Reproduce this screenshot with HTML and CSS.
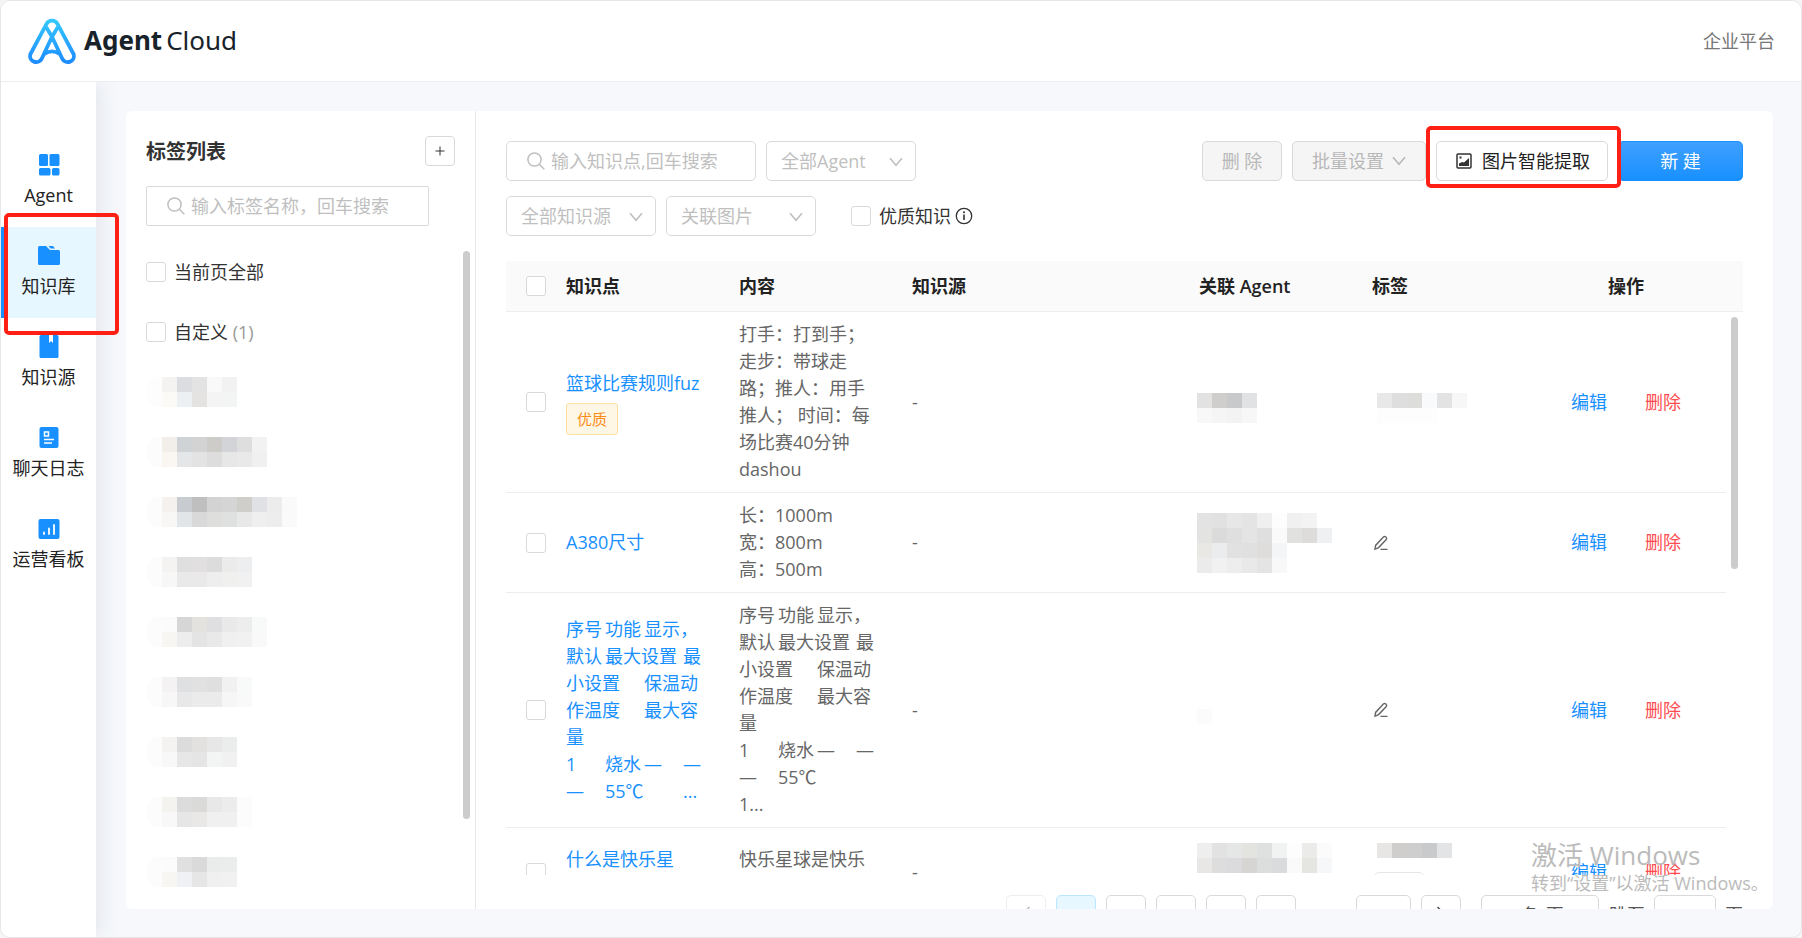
FILE: index.html
```html
<!DOCTYPE html>
<html lang="zh-CN">
<head>
<meta charset="utf-8">
<title>Agent Cloud</title>
<link rel="stylesheet" href="styles.css">
</head>
<body>
<svg class="sprite" aria-hidden="true">
  <symbol id="i-search" viewBox="0 0 18 18"><circle cx="7.5" cy="7.5" r="6.6"/><path d="M12.3 12.3 17.3 17.3"/></symbol>
  <symbol id="i-down" viewBox="0 0 14 10"><path d="M1 1.2 7 8.2 13 1.2"/></symbol>
  <symbol id="i-pencil" viewBox="0 0 16 16"><path d="M2 14.2 2.6 10.4 10.6 1.8Q11.7 1 12.9 2 14.3 3.2 13.3 4.5L5.6 12.6 2 14.2ZM7.5 14.4H14.5"/></symbol>
</svg>
<div class="window">
  <header class="topbar">
    <div class="brand">
      <svg class="brand-mark" viewBox="0 0 50 47" aria-hidden="true">
        <defs><linearGradient id="g" x1="0" y1="0" x2="0" y2="1"><stop offset="0" stop-color="#36c6ff"/><stop offset="1" stop-color="#1c8cff"/></linearGradient></defs>
        <path d="M30.6 9.500 25 18.800 14.600 41A6.200 6.200 0 0 1 3.200 36.500L19.400 6.200A6.200 6.200 0 0 1 30.600 6.200L46.800 36.500A6.200 6.200 0 0 1 35.400 41L25 18.800 19.400 9.500M17.500 35.800Q25 31 32.500 35.800" fill="none" stroke="url(#g)" stroke-width="3.800" stroke-linecap="round" stroke-linejoin="round"/>
      </svg>
      <span class="brand-text"><b>Agent</b><span>Cloud</span></span>
    </div>
    <a class="platform" href="#">企业平台</a>
  </header>
  <div class="body">
    <nav class="side">
      <a class="nav-item" href="#">
        <svg viewBox="0 0 24 24"><g fill="#1890ff"><rect x="2" y="1" width="9" height="12" rx="1.5"/><rect x="12.500" y="1" width="10" height="12" rx="1.500"/><rect x="2" y="15" width="11.500" height="7.500" rx="1.500"/><rect x="15" y="15" width="7.500" height="7.500" rx="1.500"/></g></svg>
        <span>Agent</span></a>
      <a class="nav-item active" href="#">
        <svg viewBox="0 0 24 24"><path fill="#1890ff" d="M2.500 2H9l4 4h8.500A1.500 1.500 0 0 1 23 7.500v12a1.500 1.500 0 0 1-1.500 1.500h-19A1.500 1.500 0 0 1 1 19.500v-16A1.500 1.500 0 0 1 2.500 2ZM11.500 2H16l2 2.500h-4.500Z"/></svg>
        <span>知识库</span></a>
      <a class="nav-item" href="#">
        <svg viewBox="0 0 24 24"><path fill="#1890ff" d="M4 0h8v8l2-2 2 2V0h4a1.500 1.500 0 0 1 1.500 1.500v20A1.500 1.500 0 0 1 20 23H4a1.500 1.500 0 0 1-1.500-1.500v-20A1.500 1.500 0 0 1 4 0Z"/></svg>
        <span>知识源</span></a>
      <a class="nav-item" href="#">
        <svg viewBox="0 0 24 24"><rect x="2.500" y="1" width="19" height="21" rx="2" fill="#1890ff"/><path d="M7.500 6h4v4h-4zM7 13.500h10M7 17h8" fill="none" stroke="#fff" stroke-width="1.500"/></svg>
        <span>聊天日志</span></a>
      <a class="nav-item" href="#">
        <svg viewBox="0 0 24 24"><rect x="1.500" y="2" width="21" height="20" rx="2" fill="#1890ff"/><path d="M7 15.500v1.500M12 11.500v5.500M17 8v9" fill="none" stroke="#fff" stroke-width="1.800" stroke-linecap="round"/></svg>
        <span>运营看板</span></a>
    </nav>
    <main class="card">
      <aside class="tags">
        <div class="tags-head"><h2>标签列表</h2><button class="add" type="button" aria-label="添加标签"><svg viewBox="0 0 10 10"><path d="M5 .5v9M.5 5h9"/></svg></button></div>
        <label class="search square"><svg><use href="#i-search"/></svg><input type="text" placeholder="输入标签名称，回车搜索" aria-label="搜索标签"></label>
        <div class="tag-list">
          <label class="check"><input type="checkbox"><span>当前页全部</span></label>
          <label class="check"><input type="checkbox"><span>自定义 <em>(1)</em></span></label>
          <div class="mosaic" data-tiles="fdfdfd f4f3f1 dcdde1 e3e3e3 f9f9f9 f2f2f2|fdfdfd fbfaf6 edf0f3 e4e3e1 f4f4f4 f3f5f5"></div>
          <div class="mosaic" data-tiles="fcfcfc f2eeea cfd3d6 d3d3d3 cdccc9 d3d4d8 dedede f2f2f2|fcfcfc faf6f2 e4e6e8 e3e3e3 dddddd e7e7e7 e9e9e9 f0f0f0"></div>
          <div class="mosaic" data-tiles="fcfcfc f5f1ee c8ccd0 bfbfbf d3d3d3 d5d5d5 d0cecb dfe1e4 ececec fafafa|fcfcfc f8f7f5 e2e5e8 d9d9d9 dededd dfe1e0 e8e8e8 efefef ededed fafafa"></div>
          <div class="mosaic" data-tiles="fcfcfc f4f3f2 dfdfdf e1dfe0 dcdcdc ebebeb eceef0|fcfcfc f7f7f7 e9e9e9 e9e9e9 eeeeee f0f0ee f1f1f1"></div>
          <div class="mosaic" data-tiles="fcfcfc fbfbfb d6d6d6 e4e2df dfdfe2 e9e9e9 ededed f7faf8|fcfcfc f7f6f3 ededed e4e4e4 e9e9e9 f0f0f0 f1f1f1 f9f9f9"></div>
          <div class="mosaic" data-tiles="fcfcfc f5f2f3 dee0e2 e1e1e1 dfdfdf f1f1f1 f8faf9|fcfcfc f7f7f7 e8e8e8 ebebeb ebebeb f6f6f6 f9f9f9"></div>
          <div class="mosaic" data-tiles="fcfcfc f4f3f1 dcdcdc e2e1df e7e7e7 ebedec|fcfcfc f8f8f8 e7e7e7 e5e5e5 f2f5f4 f1f1f1"></div>
          <div class="mosaic" data-tiles="fcfcfc f4f3f0 dcdcdc dadad8 e8e8e8 ececec fcfcfc|fcfcfc f8f8f8 e6e6e6 eae8e6 f0f0f0 f0f0f0 fcfcfc"></div>
          <div class="mosaic" data-tiles="fcfcfc fbfbfb e0e0e0 dadada eaecec ebedec|fcfcfc f7f6f3 eff1f4 e6e6e6 f0f0f0 f1f1f1"></div>
        </div>
        <div class="thumb"></div>
      </aside>
      <section class="content">
        <div class="toolbar">
          <div class="filters">
            <label class="search wide"><svg><use href="#i-search"/></svg><input type="text" placeholder="输入知识点,回车搜索" aria-label="搜索知识点"></label>
            <div class="pick"><select aria-label="Agent"><option>全部Agent</option></select><svg><use href="#i-down"/></svg></div>
          </div>
          <div class="actions">
            <button class="btn" type="button" disabled>删 除</button>
            <button class="btn batch" type="button" disabled>批量设置<svg><use href="#i-down"/></svg></button>
            <div class="marked"><button class="btn plain" type="button"><svg viewBox="0 0 16 16"><rect x="1" y="1" width="14" height="14" rx="1" fill="none" stroke="#333" stroke-width="1.500"/><path fill="#333" d="M3 13v-2.500l3-1.500 2 .5L13 5v8ZM3.500 3.500h2v2h-2z"/></svg>图片智能提取</button></div>
            <button class="btn primary" type="button">新 建</button>
          </div>
        </div>
        <div class="filters second">
          <div class="pick"><select aria-label="知识源"><option>全部知识源</option></select><svg><use href="#i-down"/></svg></div>
          <div class="pick"><select aria-label="图片"><option>关联图片</option></select><svg><use href="#i-down"/></svg></div>
          <label class="check quality"><input type="checkbox"><span>优质知识</span><svg viewBox="0 0 18 18"><circle cx="9" cy="9" r="7.700" fill="none" stroke="#333" stroke-width="1.300"/><path d="M9 7.500V13" stroke="#333" stroke-width="1.600"/><circle cx="9" cy="5.200" r="1" fill="#333"/></svg></label>
        </div>
        <div class="table-wrap">
          <table>
            <colgroup><col class="c-check"><col class="c-std"><col class="c-std"><col><col class="c-std"><col class="c-tag"><col class="c-ops"><col class="c-gutter"></colgroup>
            <thead><tr><th><input type="checkbox" aria-label="全选"></th><th>知识点</th><th>内容</th><th>知识源</th><th>关联 Agent</th><th>标签</th><th class="ops">操作</th><th></th></tr></thead>
            <tbody>
              <tr><td><input type="checkbox" aria-label="选择"></td>
                <td><a href="#">篮球比赛规则fuz</a><span class="badge">优质</span></td>
                <td class="pre">打手：打到手；
走步：带球走
路；推人：用手
推人； 时间：每
场比赛40分钟
dashou</td>
                <td>-</td>
                <td class="low"><div class="mosaic" data-tiles="e2e2e2 d0cecc c8c9cb e1e2e4|f8f8f8 f5f5f5 f3f3f3 f7f7f7"></div></td>
                <td class="low"><div class="mosaic tag-tiles" data-tiles="e8e8e8 dedede dddddb f8fafc e3e3e3 f7f7f7|fdfdfd fdfdfd fdfdfd fdfdfd ffffff ffffff"></div></td>
                <td class="ops"><a href="#">编辑</a><a class="del" href="#">删除</a></td><td></td></tr>
              <tr><td><input type="checkbox" aria-label="选择"></td>
                <td><a href="#">A380尺寸</a></td>
                <td class="pre">长：1000m
宽：800m
高：500m</td>
                <td>-</td>
                <td><div class="mosaic" data-tiles="e3e3e3 e1e1e1 e7e7e7 e4e4e4 efefef fdfdfd f0f0f0 f3f3f3 ffffff|e3e3e1 dbdbdb dfdfdf e4e4e4 dfdfdf fafafa e1e1e0 dddcda eff0f2|e9e8e4 eaecee e1e1e1 e0e0e0 dedddc f4f5f7|ebebec f1f1f1 ededed e9e9e9 e4e4e4 f8f8f8"></div></td>
                <td><svg class="pencil"><use href="#i-pencil"/></svg></td>
                <td class="ops"><a href="#">编辑</a><a class="del" href="#">删除</a></td><td></td></tr>
              <tr><td><input type="checkbox" aria-label="选择"></td>
                <td class="pre"><a href="#">序号&#9;功能&#9;显示，
默认&#9;最大设置&#9;最
小设置&#9;保温动
作温度&#9;最大容
量
1&#9;烧水&#9;—&#9;—
—&#9;55℃&#9;...</a></td>
                <td class="pre">序号&#9;功能&#9;显示，
默认&#9;最大设置&#9;最
小设置&#9;保温动
作温度&#9;最大容
量
1&#9;烧水&#9;—&#9;—
—&#9;55℃
1...</td>
                <td>-</td>
                <td class="low"><div class="mosaic" data-tiles="fbfbfb"></div></td>
                <td><svg class="pencil"><use href="#i-pencil"/></svg></td>
                <td class="ops"><a href="#">编辑</a><a class="del" href="#">删除</a></td><td></td></tr>
              <tr><td><input type="checkbox" aria-label="选择"></td>
                <td><a class="two-line" href="#">什么是快乐星</a></td>
                <td><div class="two-line">快乐星球是快乐</div></td>
                <td>-</td>
                <td class="top"><div class="mosaic" data-tiles="eeeeee e2e2e2 e5e6e6 e3e3e0 dfe1e0 f1f3f2 fdfdfd ebebea fafbfa|e8e7e6 dddddd dbdbdd d6d5d3 dcdddd dadbdd fafafa e5e5e2 f6f7f8"></div></td>
                <td class="top"><div class="mosaic tag-tiles" data-tiles="e7e6e5 d0cecd cecece c9cacc e3e4e6"></div><div class="tag-outline"></div></td>
                <td class="ops"><a href="#">编辑</a><a class="del" href="#">删除</a></td><td></td></tr>
            </tbody>
          </table>
          <div class="thumb"></div>
        </div>
        <div class="pager">
          <button type="button" class="off" aria-label="上一页" disabled><svg viewBox="0 0 10 16"><path d="M8.500 1 1.500 8 8.500 15"/></svg></button>
          <button type="button" class="on" aria-label="第一页"></button>
          <button type="button" aria-label="第二页"></button>
          <button type="button" aria-label="第三页"></button>
          <button type="button" aria-label="第四页"></button>
          <button type="button" aria-label="第五页"></button>
          <button type="button" class="last" aria-label="最后一页"></button>
          <button type="button" aria-label="下一页"><svg viewBox="0 0 10 16"><path d="M1.500 1 8.500 8 1.500 15"/></svg></button>
          <select aria-label="每页条数"><option>10 条/页</option></select>
          <label>跳至<input type="text" aria-label="页码">页</label>
        </div>
      </section>
    </main>
  </div>
  <div class="watermark"><strong>激活 Windows</strong><span>转到“设置”以激活 Windows。</span></div>
</div>
<script src="script.js"></script>
</body>
</html>
```

FILE: styles.css
```css
* { box-sizing: border-box; }
body {
  margin: 0;
  background: #f5f5f5;
  color: #333;
  font: 18px/28px "Open Sans", "Noto Sans CJK SC", sans-serif;
}
a { color: #1890ff; text-decoration: none; }
input, select, button { font: inherit; color: inherit; }
.sprite { position: absolute; width: 0; height: 0; }
svg { fill: none; stroke: none; flex: none; }

.window {
  position: relative;
  display: flex;
  flex-direction: column;
  height: 100vh;
  border: 1px solid #e6e6e6;
  border-radius: 10px;
  background: #f6f8fb;
  overflow: hidden;
}
.topbar {
  display: flex;
  align-items: center;
  justify-content: space-between;
  height: 81px;
  padding: 0 26px;
  background: #fff;
  border-bottom: 1px solid #eceef2;
}
.brand { display: flex; align-items: center; gap: 7px; }
.brand-mark { width: 50px; height: 47px; }
.brand-text { display: flex; gap: 4px; padding-bottom: 2px; font: 26px/40px "Noto Sans", sans-serif; color: #18222a; }
.platform { color: #777; }

.body { display: flex; flex: 1; min-height: 0; }
.side {
  display: flex;
  flex-direction: column;
  width: 95px;
  padding-top: 54px;
  background: #fff;
  box-shadow: 2px 0 20px #dfe2ea;
  clip-path: inset(0 -30px 0 0);
  z-index: 1;
}
.nav-item {
  position: relative;
  display: flex;
  flex-direction: column;
  align-items: center;
  gap: 4px;
  height: 91px;
  padding-top: 17px;
  color: #222;
}
.nav-item svg { width: 24px; height: 24px; }
.nav-item.active { background: #e6f7ff; border-left: 3px solid #1890ff; padding-right: 3px; }
.nav-item.active::after,
.marked::after {
  content: "";
  position: absolute;
  border: 4px solid #ff2015;
  border-radius: 5px;
  pointer-events: none;
}
.nav-item.active::after { inset: -14px -23px -17px 0; }

.card {
  display: flex;
  flex: 1;
  min-width: 0;
  margin: 29px 28px 28px 30px;
  background: #fff;
  border-radius: 6px;
  overflow: hidden;
}
.tags { position: relative; width: 350px; padding: 25px 20px 0; border-right: 1px solid #e8e8e8; }
.tags-head { display: flex; align-items: flex-end; justify-content: space-between; }
.tags-head h2 { margin: 0; font-size: 20px; }
.add {
  width: 30px;
  height: 30px;
  padding: 0;
  border: 1px solid #d9d9d9;
  border-radius: 4px;
  background: #fff;
  line-height: 0;
}
.add svg { width: 10px; height: 10px; stroke: #333; }
.search {
  display: flex;
  align-items: center;
  gap: 6px;
  height: 40px;
  padding: 0 20px;
  border: 1px solid #d9d9d9;
  border-radius: 5px;
}
.search svg { width: 18px; height: 18px; stroke: #bfbfbf; stroke-width: 1.5; }
.search input { width: 100%; min-width: 0; padding: 0; border: 0; outline: 0; background: none; }
.search input::placeholder { color: #bfbfbf; opacity: 1; }
.search.square { width: 283px; margin-top: 20px; border-radius: 2px; }
.search.wide { width: 250px; }
.tag-list { display: flex; flex-direction: column; gap: 30px; padding-top: 31px; }
.check { display: flex; align-items: center; gap: 8px; height: 30px; }
.check em { font-style: normal; color: #999; }
input[type="checkbox"] {
  appearance: none;
  display: block;
  flex: none;
  width: 20px;
  height: 20px;
  margin: 0;
  border: 1px solid #d9d9d9;
  border-radius: 3px;
  background: #fff;
}
.mosaic { display: flex; flex-direction: column; }
.mosaic div { display: flex; }
.mosaic i { width: 15px; height: 15px; }
.tag-list .mosaic { margin-left: 1px; overflow: hidden; border-radius: 12px 0 0 12px; }
.thumb { position: absolute; width: 7px; border-radius: 4px; background: #ccc; }
.tags .thumb { top: 140px; right: 5px; bottom: 90px; }

.content { display: flex; flex-direction: column; flex: 1; min-width: 0; padding: 30px 30px 0; }
.toolbar { display: flex; justify-content: space-between; }
.filters, .actions { display: flex; gap: 10px; }
.second { margin-top: 15px; }
.pick { position: relative; width: 150px; height: 40px; }
.pick select, .pager select {
  appearance: none;
  width: 100%;
  height: 100%;
  padding: 0 14px;
  border: 1px solid #d9d9d9;
  border-radius: 5px;
  background: #fff;
  color: #bfbfbf;
}
.pick svg { position: absolute; right: 13px; top: 16px; width: 14px; height: 10px; stroke: #bfbfbf; stroke-width: 1.6; pointer-events: none; }
.quality { height: 40px; margin-left: 25px; }
.quality svg { width: 18px; height: 18px; margin-left: -4px; }
.btn {
  display: flex;
  align-items: center;
  justify-content: center;
  width: 80px;
  height: 40px;
  padding: 0;
  border: 1px solid #d9d9d9;
  border-radius: 5px;
  background: #f5f5f5;
  color: #b8b8b8;
  white-space: pre;
}
.batch { width: 134px; gap: 8px; }
.batch svg { width: 14px; height: 10px; stroke: #b8b8b8; stroke-width: 1.6; }
.plain { width: 172px; gap: 10px; padding-left: 2px; background: #fff; color: #222; }
.plain svg { width: 16px; height: 16px; }
.primary { width: 125px; border-color: #1890ff; background: linear-gradient(#40a0ff, #1890ff); color: #fff; }
.marked { position: relative; z-index: 1; }
.marked::after { inset: -15px -13px -7px -10px; }

.table-wrap { position: relative; flex: 1; min-height: 0; margin-top: 25px; overflow: hidden; }
table { width: 100%; table-layout: fixed; border-collapse: separate; border-spacing: 0; }
.c-check { width: 50px; }
.c-std { width: 173px; }
.c-tag { width: 164px; }
.c-ops { width: 200px; }
.c-gutter { width: 17px; }
th { height: 51px; padding: 0 10px; background: #fafafa; border-bottom: 1px solid #eee; color: #222; text-align: left; font-weight: 600; }
td { padding: 9px 10px; border-bottom: 1px solid #eee; color: #666; line-height: 27px; }
td:last-child { border-bottom: 0; padding: 0; }
th:first-child, td:first-child { padding: 0 0 0 20px; }
th.ops, td.ops { text-align: center; }
.ops a + a { margin-left: 38px; }
.ops .del { color: #ff4d4f; }
.pre { white-space: pre; tab-size: 39px; }
.badge {
  display: block;
  width: 52px;
  height: 32px;
  margin-top: 6px;
  border: 1px solid #ffe0a0;
  border-radius: 3px;
  background: #fff7e6;
  color: #fa8c16;
  font-size: 15px;
  line-height: 30px;
  text-align: center;
}
td .mosaic { margin-left: -2px; }
td .tag-tiles { margin-left: 5px; }
.low { padding-top: 21px; }
.pencil { display: block; width: 16px; height: 16px; margin-left: 1px; stroke: #666; stroke-width: 1.4; }
.two-line { display: block; min-height: 54px; }
.top { vertical-align: top; padding-top: 15px; padding-bottom: 13px; }
.tag-outline { width: 50px; height: 32px; margin: 14px 0 0 2px; border: 1px solid #e6e6e6; border-radius: 5px; }
.table-wrap .thumb { top: 56px; right: 5px; height: 252px; }

.pager { display: flex; justify-content: flex-end; gap: 10px; height: 40px; margin: 20px 0 -26px; color: #555; }
.pager button { width: 40px; height: 40px; padding: 0; border: 1px solid #d9d9d9; border-radius: 5px; background: #fff; }
.pager svg { width: 10px; height: 16px; stroke: #555; stroke-width: 1.5; }
.pager .off { border-color: #eee; }
.pager .off svg { stroke: #bbb; }
.pager .on { border-color: #bae7ff; background: #e6f7ff; }
.pager .last { width: 55px; margin-left: 50px; }
.pager select { width: 118px; margin-left: 10px; color: #555; }
.pager label { display: flex; align-items: center; gap: 9px; }
.pager input { width: 62px; height: 40px; border: 1px solid #d9d9d9; border-radius: 5px; }

.watermark {
  position: absolute;
  right: 37px;
  bottom: 40px;
  z-index: 2;
  display: flex;
  flex-direction: column;
  width: 233px;
  color: #bbb;
  white-space: nowrap;
  pointer-events: none;
}
.watermark strong { font-size: 26px; font-weight: 400; }
```

FILE: script.js
```js
// Builds the obscured-name tiles: rows are split by "|", colours by spaces.
document.querySelectorAll('.mosaic').forEach((box) => {
  box.dataset.tiles.split('|').forEach((row) => {
    const line = document.createElement('div');
    row.split(' ').forEach((colour) => {
      const tile = document.createElement('i');
      tile.style.background = '#' + colour;
      line.append(tile);
    });
    box.append(line);
  });
});
```
